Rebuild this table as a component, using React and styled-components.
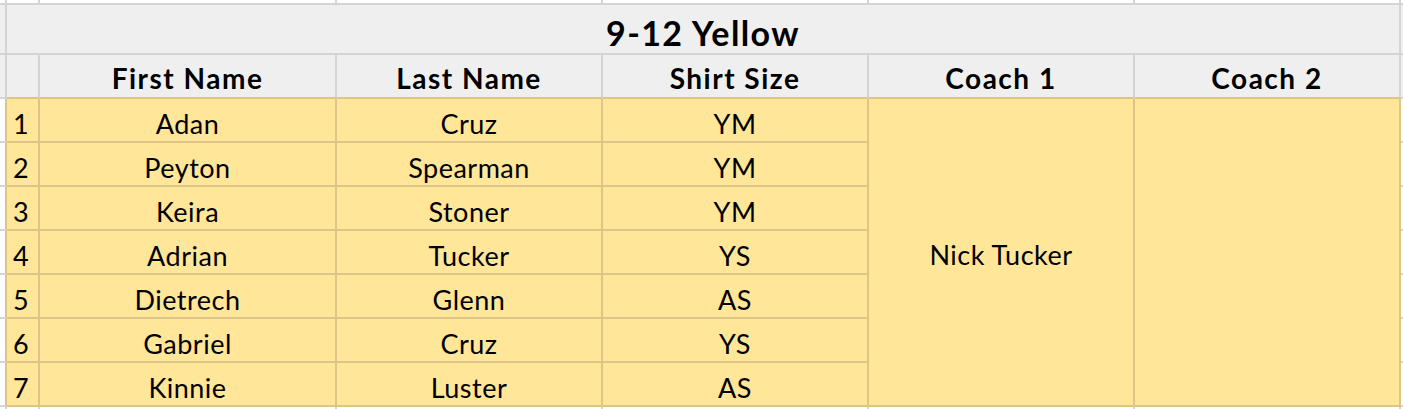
import React from 'react';
import styled, { createGlobalStyle, css } from 'styled-components';

const GRID = '#d4d4d4';
const TAN = '#dcc586';
const HEAD_BG = '#efefef';
const YELLOW = '#ffe699';

const GlobalStyle = createGlobalStyle`
  html, body {
    margin: 0;
    padding: 0;
    background: #ffffff;
  }
  body {
    font-family: Lato, 'Noto Sans', sans-serif;
    color: #000000;
  }
`;

const Sheet = styled.div`
  display: grid;
  grid-template-columns: 7px 33px 297px 266px 266px 266px 266px 2px;
  grid-template-rows: 5px 50px 44px repeat(7, 44px) 2px;
  width: 1403px;
  height: 409px;
  overflow: hidden;
`;

const tones = {
  blank: css`
    background: #ffffff;
    border-color: ${GRID};
  `,
  head: css`
    background: ${HEAD_BG};
    border-color: ${GRID};
  `,
  data: css`
    background: ${YELLOW};
    border-color: ${TAN};
  `,
};

const Cell = styled.div`
  box-sizing: border-box;
  display: flex;
  align-items: flex-end;
  justify-content: center;
  min-width: 0;
  border-style: solid;
  border-width: 0 ${(p) => (p.$noRight ? 0 : 2)}px ${(p) => (p.$noBottom ? 0 : 2)}px 0;
  ${(p) => tones[p.$tone || 'blank']}
  ${(p) => p.$rightColor && `border-right-color: ${p.$rightColor};`}
  ${(p) => p.$bottomColor && `border-bottom-color: ${p.$bottomColor};`}
  font-size: 27px;
  letter-spacing: 0.5px;
  line-height: 1;
  white-space: nowrap;
`;

const TitleCell = styled(Cell)`
  grid-column: 2 / 8;
  font-size: 34px;
  font-weight: 700;
  letter-spacing: 1.4px;
  padding-bottom: 3px;
`;

const HeadCell = styled(Cell)`
  font-size: 28px;
  font-weight: 700;
  letter-spacing: 1.5px;
  padding-bottom: 5px;
`;

const RowNum = styled(Cell)`
  justify-content: flex-start;
  padding: 0 0 4px 6px;
`;

const DataCell = styled(Cell)`
  padding-bottom: 4px;
`;

const MergedCell = styled(Cell)`
  grid-row: span 7;
  align-items: center;
  padding-top: 4px;
`;

const players = [
  { first: 'Adan', last: 'Cruz', size: 'YM' },
  { first: 'Peyton', last: 'Spearman', size: 'YM' },
  { first: 'Keira', last: 'Stoner', size: 'YM' },
  { first: 'Adrian', last: 'Tucker', size: 'YS' },
  { first: 'Dietrech', last: 'Glenn', size: 'AS' },
  { first: 'Gabriel', last: 'Cruz', size: 'YS' },
  { first: 'Kinnie', last: 'Luster', size: 'AS' },
];

const headers = ['First Name', 'Last Name', 'Shirt Size', 'Coach 1', 'Coach 2'];

function App() {
  return (
    <>
      <GlobalStyle />
      <Sheet>
        {/* strip of the row above */}
        {Array.from({ length: 7 }).map((_, i) => (
          <Cell key={'top' + i} $tone="blank" />
        ))}
        <Cell $tone="blank" $noRight />

        {/* title row */}
        <Cell $tone="head" />
        <TitleCell $tone="head">9-12 Yellow</TitleCell>
        <Cell $tone="head" $noRight />

        {/* column headers */}
        <Cell $tone="head" />
        <HeadCell $tone="head" $bottomColor={TAN} />
        {headers.map((h) => (
          <HeadCell key={h} $tone="head" $bottomColor={TAN}>
            {h}
          </HeadCell>
        ))}
        <Cell $tone="head" $noRight />

        {players.map((p, i) => (
          <React.Fragment key={p.first}>
            <Cell $tone="blank" $rightColor={TAN} />
            <RowNum $tone="data">{i + 1}</RowNum>
            <DataCell $tone="data">{p.first}</DataCell>
            <DataCell $tone="data">{p.last}</DataCell>
            <DataCell $tone="data">{p.size}</DataCell>
            {i === 0 && (
              <>
                <MergedCell $tone="data">Nick Tucker</MergedCell>
                <MergedCell $tone="data" />
              </>
            )}
            <Cell $tone="blank" $noRight />
          </React.Fragment>
        ))}

        {/* sliver of the row below */}
        {Array.from({ length: 7 }).map((_, i) => (
          <Cell key={'bottom' + i} $tone="blank" $noBottom />
        ))}
        <Cell $tone="blank" $noRight $noBottom />
      </Sheet>
    </>
  );
}

export default App;
